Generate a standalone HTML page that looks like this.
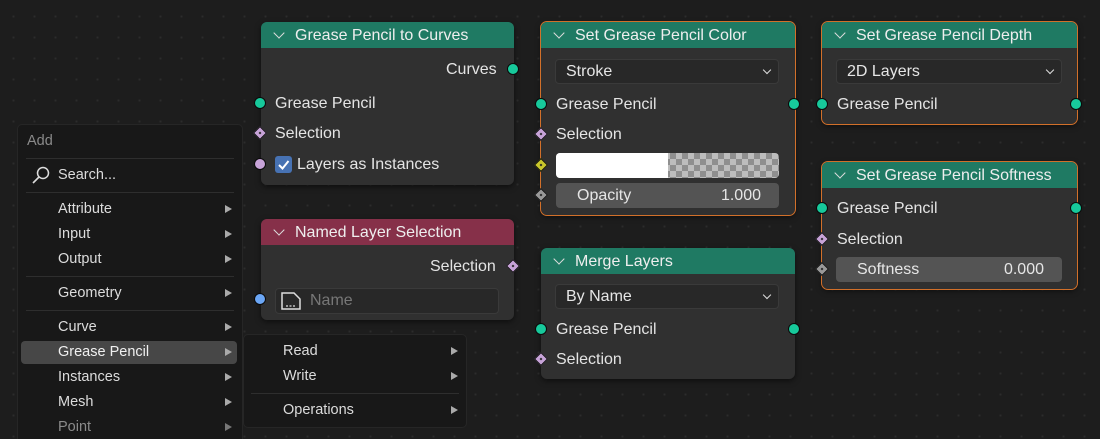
<!DOCTYPE html>
<html><head><meta charset="utf-8"><style>
*{margin:0;padding:0;box-sizing:border-box}
html,body{width:1100px;height:439px;overflow:hidden}
body{background:#1d1d1d;background-image:radial-gradient(circle,#2c2c2c 1px,transparent 1.2px);background-size:21px 21px;background-position:3px 6px;font-family:"Liberation Sans","DejaVu Sans",sans-serif;color:#e6e6e6;font-size:16px;position:relative}
.a{position:absolute;white-space:nowrap}
.node{position:absolute;background:#303030;border-radius:6px;box-shadow:0 2px 6px rgba(0,0,0,.5)}
.sel{outline:1.5px solid #d2702a;outline-offset:0}
.hd{position:absolute;left:0;right:0;top:0;height:26px;background:#1f7a63;border-radius:6px 6px 0 0;padding-left:34px;line-height:27px;font-size:16px;color:#eee}
.hd.r{background:#863049}
.chev{position:absolute;left:14px;top:7px;width:8px;height:8px;border-right:1.5px solid #ddd;border-bottom:1.5px solid #ddd;transform:rotate(45deg)}
.t{position:absolute;line-height:18px;font-size:16px;color:#e4e4e4;margin-top:1px}
.c{position:absolute;width:12px;height:12px;border-radius:50%;background:#17c99b;border:1px solid #0a0a0a;margin:-1px 0 0 -1px}
.d{position:absolute;width:10px;height:10px;transform:rotate(45deg);background:#c7a3d8;border:1px solid #111;margin:-1px 0 0 -1px}
.d::after{content:"";position:absolute;left:3px;top:3px;width:2px;height:2px;background:#222}
.dd{position:absolute;background:#282828;border:1px solid #3a3a3a;border-radius:4px;height:25px;line-height:24px;padding-left:10px;font-size:16px}
.dd::after{content:"";position:absolute;right:8px;top:7px;width:5px;height:5px;border-right:1.5px solid #ddd;border-bottom:1.5px solid #ddd;transform:rotate(45deg)}
.fld{position:absolute;background:#545454;border-radius:4px;height:25px;line-height:26px;padding:0 18px 0 21px;font-size:16px;display:flex;justify-content:space-between}
.menu{position:absolute;background:#181818;border:1px solid #262626;border-radius:5px}
.mi{position:absolute;font-size:14.5px;line-height:18px;color:#dcdcdc;margin-top:1px}
.ar{position:absolute;width:0;height:0;border-left:7px solid #aaa;border-top:4px solid transparent;border-bottom:4px solid transparent}
.sep{position:absolute;height:1px;background:#2e2e2e}
</style></head><body>

<!-- Menu -->
<div class="menu" style="left:17px;top:124px;width:226px;height:315px;border-bottom:none;border-radius:5px 5px 0 0"></div>
<div class="mi" style="left:27px;top:131px;color:#8a8a8a">Add</div>
<div class="sep" style="left:26px;top:158px;width:208px"></div>
<svg class="a" style="left:31px;top:165px" width="20" height="20" viewBox="0 0 20 20"><circle cx="12" cy="8" r="5.5" fill="none" stroke="#ddd" stroke-width="1.5"/><line x1="8" y1="12" x2="2" y2="18" stroke="#ddd" stroke-width="1.6"/></svg>
<div class="mi" style="left:58px;top:165px">Search...</div>
<div class="sep" style="left:26px;top:192px;width:208px"></div>
<div class="a" style="left:21px;top:341px;width:216px;height:23px;background:#474747;border-radius:4px"></div>
<div class="mi" style="left:58px;top:199px">Attribute</div><div class="ar" style="left:225px;top:205px"></div>
<div class="mi" style="left:58px;top:224px">Input</div><div class="ar" style="left:225px;top:230px"></div>
<div class="mi" style="left:58px;top:249px">Output</div><div class="ar" style="left:225px;top:255px"></div>
<div class="sep" style="left:26px;top:276px;width:208px"></div>
<div class="mi" style="left:58px;top:283px">Geometry</div><div class="ar" style="left:225px;top:289px"></div>
<div class="sep" style="left:26px;top:310px;width:208px"></div>
<div class="mi" style="left:58px;top:317px">Curve</div><div class="ar" style="left:225px;top:323px"></div>
<div class="mi" style="left:58px;top:342px;color:#f0f0f0">Grease Pencil</div><div class="ar" style="left:225px;top:348px"></div>
<div class="mi" style="left:58px;top:367px">Instances</div><div class="ar" style="left:225px;top:373px"></div>
<div class="mi" style="left:58px;top:392px">Mesh</div><div class="ar" style="left:225px;top:398px"></div>
<div class="mi" style="left:58px;top:417px;color:#8a8a8a">Point</div><div class="ar" style="left:225px;top:423px;border-left-color:#777"></div>

<div class="menu" style="left:243px;top:334px;width:224px;height:94px"></div>
<div class="mi" style="left:283px;top:341px">Read</div><div class="ar" style="left:451px;top:347px"></div>
<div class="mi" style="left:283px;top:366px">Write</div><div class="ar" style="left:451px;top:372px"></div>
<div class="sep" style="left:251px;top:393px;width:208px"></div>
<div class="mi" style="left:283px;top:400px">Operations</div><div class="ar" style="left:451px;top:406px"></div>

<!-- Node 1 -->
<div class="node" style="left:261px;top:22px;width:253px;height:163px">
<div class="hd"><div class="chev"></div>Grease Pencil to Curves</div></div>
<div class="t" style="left:446px;top:60px">Curves</div><div class="c" style="left:508px;top:64px"></div>
<div class="c" style="left:255px;top:98px"></div><div class="t" style="left:275px;top:94px">Grease Pencil</div>
<div class="d" style="left:256px;top:129px"></div><div class="t" style="left:275px;top:124px">Selection</div>
<div class="c" style="left:255px;top:159px;background:#c7a3d8"></div>
<div class="a" style="left:275px;top:156px;width:17px;height:17px;background:#4772b3;border-radius:3px"></div>
<svg class="a" style="left:276px;top:157px" width="15" height="15"><path d="M3 8 L6.5 11.5 L12.5 4" fill="none" stroke="#fff" stroke-width="2"/></svg>
<div class="t" style="left:297px;top:155px">Layers as Instances</div>

<!-- Node 2 -->
<div class="node" style="left:261px;top:219px;width:253px;height:101px">
<div class="hd r"><div class="chev"></div>Named Layer Selection</div></div>
<div class="t" style="left:430px;top:257px">Selection</div><div class="d" style="left:509px;top:262px"></div>
<div class="c" style="left:255px;top:294px;background:#6ba6f5"></div>
<div class="a" style="left:275px;top:288px;width:224px;height:26px;background:#282828;border:1px solid #3a3a3a;border-radius:4px"></div>
<svg class="a" style="left:280px;top:291px" width="22" height="20"><path d="M2 2 H14 L20 8 V18 H2 Z" fill="none" stroke="#ddd" stroke-width="1.5"/><path d="M6 15 H16" stroke="#ddd" stroke-dasharray="2 1.5" stroke-width="1.3"/></svg>
<div class="t" style="left:310px;top:291px;color:#777">Name</div>

<!-- Node 3 -->
<div class="node sel" style="left:541px;top:22px;width:254px;height:193px">
<div class="hd"><div class="chev"></div>Set Grease Pencil Color</div></div>
<div class="dd" style="left:555px;top:59px;width:224px">Stroke</div>
<div class="c" style="left:536px;top:99px"></div><div class="t" style="left:556px;top:95px">Grease Pencil</div><div class="c" style="left:789px;top:99px"></div>
<div class="d" style="left:537px;top:130px"></div><div class="t" style="left:556px;top:125px">Selection</div>
<div class="d" style="left:537px;top:161px;background:#c9c72b"></div>
<div class="a" style="left:556px;top:153px;width:223px;height:25px;border-radius:4px;overflow:hidden;background-color:#bdbdbd;background-image:linear-gradient(45deg,#8f8f8f 25%,transparent 25%,transparent 75%,#8f8f8f 75%),linear-gradient(45deg,#8f8f8f 25%,transparent 25%,transparent 75%,#8f8f8f 75%);background-size:12px 12px;background-position:0 0,6px 6px"><div style="width:112px;height:100%;background:#fff"></div></div>
<div class="d" style="left:537px;top:191px;background:#999"></div>
<div class="fld" style="left:556px;top:183px;width:223px"><span>Opacity</span><span>1.000</span></div>

<!-- Node 4 -->
<div class="node" style="left:541px;top:248px;width:254px;height:131px">
<div class="hd"><div class="chev"></div>Merge Layers</div></div>
<div class="dd" style="left:555px;top:284px;width:224px">By Name</div>
<div class="c" style="left:536px;top:324px"></div><div class="t" style="left:556px;top:320px">Grease Pencil</div><div class="c" style="left:789px;top:324px"></div>
<div class="d" style="left:537px;top:355px"></div><div class="t" style="left:556px;top:350px">Selection</div>

<!-- Node 5 -->
<div class="node sel" style="left:822px;top:22px;width:255px;height:102px">
<div class="hd"><div class="chev"></div>Set Grease Pencil Depth</div></div>
<div class="dd" style="left:836px;top:59px;width:226px">2D Layers</div>
<div class="c" style="left:817px;top:99px"></div><div class="t" style="left:837px;top:95px">Grease Pencil</div><div class="c" style="left:1071px;top:99px"></div>

<!-- Node 6 -->
<div class="node sel" style="left:822px;top:162px;width:255px;height:127px">
<div class="hd"><div class="chev"></div>Set Grease Pencil Softness</div></div>
<div class="c" style="left:817px;top:203px"></div><div class="t" style="left:837px;top:199px">Grease Pencil</div><div class="c" style="left:1071px;top:203px"></div>
<div class="d" style="left:818px;top:235px"></div><div class="t" style="left:837px;top:230px">Selection</div>
<div class="d" style="left:818px;top:265px;background:#999"></div>
<div class="fld" style="left:836px;top:257px;width:226px"><span>Softness</span><span>0.000</span></div>

</body></html>
